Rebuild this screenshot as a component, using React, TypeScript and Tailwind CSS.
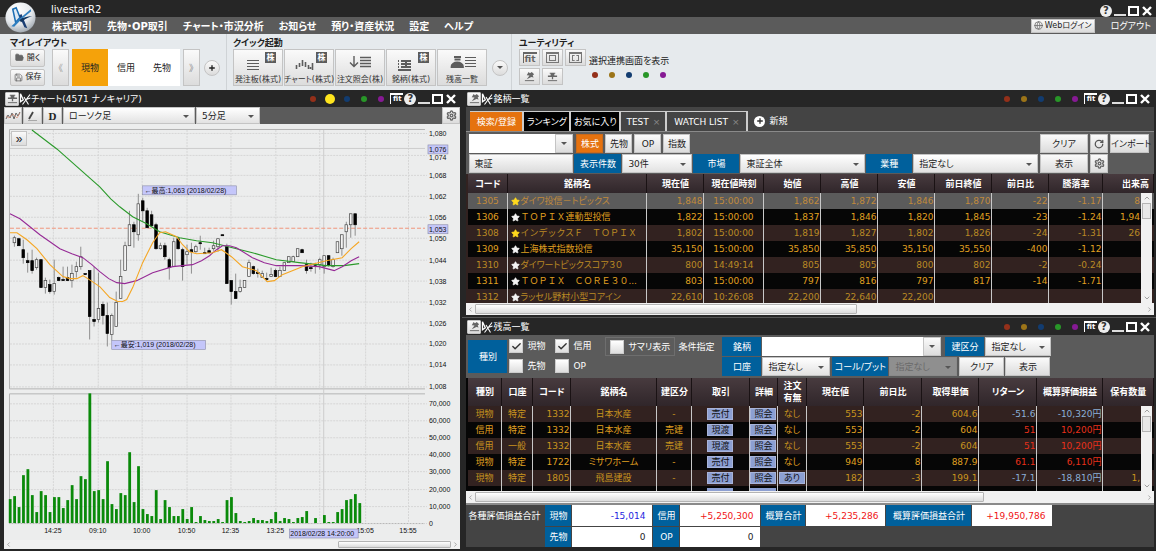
import { useState } from "react";
import type { ReactNode } from "react";
import { Check, ChevronDown, ChevronLeft, ChevronRight, ChevronUp, FolderOpen, Globe, Plus, RotateCw, Save, Settings, Star } from "lucide-react";
import { clsx } from "clsx";

const MENU = ["株式取引", "先物・OP取引", "チャート・市況分析", "お知らせ", "預り・資産状況", "設定", "ヘルプ"];

const FACE = "bg-gradient-to-b from-[#fafafa] to-[#dcdcdc] border border-[#c4c4c4]";

/* ---------- chart data ---------- */

const VOLUMES = [
  24, 27, 16, 48, 54, 28, 11, 32, 28, 11, 26, 26, 15, 23, 38, 24, 47, 44, 130, 32, 33, 24, 62, 19, 14, 30, 28, 71, 21,
  57, 14, 9, 7, 33, 4, 23, 16, 7, 7, 14, 4, 16, 1, 7, 3, 2, 2, 4, 1, 23, 26, 10, 2, 1, 2, 5, 3, 3, 2, 4, 11, 2, 5, 4,
  1, 5, 6, 12, 0, 5, 0, 8, 1, 1, 11, 14, 23, 24, 29, 20,
];

// index, high, low, body top, body bottom, 1 = falling
type Candle = [number, number, number, number, number, number];

const CANDLES: Candle[] = [
  [1, 236, 247, 238, 243, 0], [2, 238, 246, 239, 246, 1], [3, 240, 264, 250, 258, 1], [4, 253, 273, 261, 263, 1],
  [5, 250, 274, 261, 271, 1], [6, 258, 270, 260, 268, 0], [7, 260, 288, 260, 288, 1], [8, 278, 294, 281, 288, 0],
  [9, 280, 294, 285, 292, 1], [10, 260, 295, 284, 292, 0], [11, 277, 281, 278, 281, 1], [12, 267, 281, 280, 281, 1],
  [13, 267, 281, 278, 281, 1], [14, 265, 288, 274, 281, 0], [15, 262, 278, 267, 272, 0], [16, 247, 270, 257, 267, 0],
  [17, 274, 275, 274, 275, 1], [18, 271, 340, 271, 317, 1], [19, 267, 327, 320, 322, 1], [20, 273, 323, 309, 320, 0],
  [21, 302, 325, 305, 316, 1], [22, 303, 347, 316, 334, 1], [23, 314, 341, 316, 335, 0], [24, 292, 327, 303, 327, 0],
  [25, 260, 299, 277, 299, 0], [26, 242, 271, 246, 271, 0], [27, 211, 246, 225, 246, 0], [28, 222, 248, 225, 232, 1],
  [29, 194, 241, 204, 235, 0], [30, 198, 222, 201, 211, 1], [31, 208, 228, 211, 228, 1], [32, 211, 227, 215, 226, 1],
  [33, 223, 250, 225, 249, 1], [34, 243, 250, 246, 249, 0], [35, 243, 260, 246, 257, 1], [36, 258, 280, 260, 268, 1],
  [37, 238, 267, 242, 267, 0], [38, 237, 250, 239, 249, 1], [39, 248, 281, 250, 267, 1], [40, 245, 265, 252, 255, 0],
  [41, 243, 274, 250, 252, 1], [42, 245, 253, 247, 252, 0], [43, 236, 250, 243, 244, 1], [44, 248, 254, 253, 254, 1],
  [45, 248, 254, 251, 253, 1], [46, 241, 251, 246, 249, 0], [47, 239, 252, 239, 247, 0], [48, 235, 236, 235, 236, 1],
  [49, 244, 284, 247, 284, 1], [50, 281, 305, 281, 292, 1], [51, 274, 299, 292, 299, 1], [52, 280, 293, 288, 292, 0],
  [53, 281, 288, 281, 288, 0], [54, 260, 277, 263, 277, 0], [55, 266, 275, 267, 274, 1], [56, 269, 278, 273, 274, 1],
  [57, 271, 278, 274, 278, 0], [58, 273, 282, 279, 280, 1], [59, 268, 277, 275, 277, 0], [60, 269, 277, 271, 277, 1],
  [61, 267, 277, 271, 277, 0], [62, 263, 271, 263, 271, 0], [63, 257, 263, 257, 263, 0], [64, 256, 262, 257, 262, 0],
  [65, 249, 257, 249, 257, 0], [66, 249, 253, 250, 253, 1], [67, 260, 274, 265, 271, 1], [68, 263, 272, 268, 269, 1],
  [69, 263, 274, 266, 267, 1], [70, 258, 270, 260, 265, 0], [71, 256, 274, 256, 267, 0], [72, 256, 267, 256, 266, 1],
  [73, 258, 268, 260, 267, 0], [74, 242, 253, 242, 253, 0], [75, 235, 256, 235, 249, 0], [76, 222, 248, 225, 232, 0],
  [77, 214, 238, 214, 225, 0], [78, 214, 236, 214, 225, 1],
];

const PRICE_TICKS: [string, number][] = [
  ["1,080", 133], ["1,074", 155], ["1,068", 175], ["1,062", 196], ["1,056", 217], ["1,050", 238], ["1,044", 260],
  ["1,038", 281], ["1,032", 302], ["1,026", 323], ["1,020", 344], ["1,014", 365], ["1,008", 387],
];

const VOLUME_TICKS: [string, number][] = [
  ["70,000", 404], ["60,000", 421], ["50,000", 438], ["40,000", 455], ["30,000", 472], ["20,000", 490],
  ["10,000", 507], ["0", 524],
];

const TIME_TICKS: [string, number][] = [
  ["14:25", 53], ["09:10", 98], ["10:00", 142], ["10:50", 187], ["12:35", 231], ["13:25", 276], ["", 320],
  ["15:05", 366], ["15:55", 409],
];

const MA_SHORT =
  "10,233 17,233 27,240 37,249 50,265 63,277 70,279 77,279 83,276 88,279 100,287 110,298 118,302 123,302 127,300 133,288 143,263 153,243 160,233 166,232 177,237 183,245 190,252 197,254 213,253 222,250 232,257 243,267 257,271 268,282 275,281 283,275 303,267 315,264 327,261 343,258 352,249 360,242";
const MA_MIDDLE =
  "10,214 20,219 40,235 60,249 72,254 83,258 92,265 100,272 109,279 117,283 125,284 137,281 153,273 173,267 193,265 202,261 210,256 217,250 223,246 230,246 237,248 253,258 265,263 277,266 300,266 320,267 335,271 343,267 352,261 360,257";
const MA_LONG =
  "32,130 57,149 83,172 100,187 111,199 120,207 133,217 147,224 160,232 180,238 197,241 213,243 237,249 253,253 277,260 300,263 327,266 345,266 360,264";

/* ---------- table data ---------- */

type StockRow = { code: string; name: string; fav: boolean; wide: boolean; values: string[] };

const STOCKS: StockRow[] = [
  { code: "1305", name: "ダイワ投信－トピックス", fav: true, wide: false, values: ["1,848", "15:00:00", "1,862", "1,872", "1,846", "1,870", "-22", "-1.17", "8"] },
  { code: "1306", name: "ＴＯＰＩＸ連動型投信", fav: false, wide: true, values: ["1,822", "15:00:00", "1,837", "1,846", "1,820", "1,845", "-23", "-1.24", "1,94"] },
  { code: "1308", name: "インデックスＦ　ＴＯＰＩＸ", fav: true, wide: true, values: ["1,802", "15:00:00", "1,819", "1,827", "1,802", "1,826", "-24", "-1.31", "26"] },
  { code: "1309", name: "上海株式指数投信", fav: false, wide: false, values: ["35,150", "15:00:00", "35,850", "35,850", "35,150", "35,550", "-400", "-1.12", ""] },
  { code: "1310", name: "ダイワートピックスコア３０", fav: false, wide: false, values: ["800", "14:49:14", "805", "805", "800", "802", "-2", "-0.24", ""] },
  { code: "1311", name: "ＴＯＰＩＸ　ＣＯＲＥ３０...", fav: false, wide: true, values: ["803", "15:00:00", "797", "816", "797", "817", "-14", "-1.71", ""] },
  { code: "1312", name: "ラッセル野村小型コアイン", fav: false, wide: false, values: ["22,610", "10:26:08", "22,200", "22,640", "22,200", "", "", "", ""] },
];

const STOCK_HEAD = ["コード", "銘柄名", "現在値", "現在値時刻", "始値", "高値", "安値", "前日終値", "前日比", "騰落率", "出来高"];

type HoldingRow = {
  kind: string;
  account: string;
  code: string;
  name: string;
  side: string;
  trade: string;
  order: string;
  price: string;
  diff: string;
  cost: string;
  ret: string;
  pl: string;
  qty: string;
};

const HOLDINGS: HoldingRow[] = [
  { kind: "現物", account: "特定", code: "1332", name: "日本水産", side: "-", trade: "売付", order: "なし", price: "553", diff: "-2", cost: "604.6", ret: "-51.6", pl: "-10,320円", qty: "" },
  { kind: "信用", account: "特定", code: "1332", name: "日本水産", side: "売建", trade: "現渡", order: "なし", price: "553", diff: "-2", cost: "604", ret: "51", pl: "10,200円", qty: "" },
  { kind: "信用", account: "一般", code: "1332", name: "日本水産", side: "売建", trade: "現渡", order: "なし", price: "553", diff: "-2", cost: "604", ret: "51", pl: "10,200円", qty: "" },
  { kind: "現物", account: "特定", code: "1722", name: "ミサワホーム", side: "-", trade: "売付", order: "なし", price: "949", diff: "8", cost: "887.9", ret: "61.1", pl: "6,110円", qty: "" },
  { kind: "現物", account: "特定", code: "1805", name: "飛島建設", side: "-", trade: "売付", order: "あり", price: "182", diff: "-3", cost: "199.1", ret: "-17.1", pl: "-18,810円", qty: "1," },
];

const HOLDING_HEAD = ["種別", "口座", "コード", "銘柄名", "建区分", "取引", "詳細", "注文有無", "現在値", "前日比", "取得単価", "リターン", "概算評価損益", "保有数量"];

/* ---------- shared pieces ---------- */

function Mark({ className }: { className?: string }) {
  return (
    <svg viewBox="0 0 12 12" className={className} fill="none" stroke="#fff" aria-hidden="true">
      <path d="M1.500 .8v8l2.800-2z" strokeWidth="1.300" />
      <path d="M5 4l4.500 7.500M11 1.500L3.500 11.500M7 6.500L11.500 5" strokeWidth="1.100" />
    </svg>
  );
}

function PinIcon({ flat = false }: { flat?: boolean }) {
  return (
    <svg viewBox="0 0 14 12" className="h-[11px] w-[13px]" aria-hidden="true">
      {flat ? (
        <path d="M4 2h6v1H9v2h3v1.500H7.700V9H6.300V6.500H2V5h3V3H4z" fill="#666" />
      ) : (
        <path d="M6 1l1.500 1.500L9.500 1 12 3.500 10.500 5l1 2L9 6.500 4 9l3-4-3-.5z" fill="#666" />
      )}
      <path d="M2 10.500h10" stroke="#666" />
    </svg>
  );
}

function Dots({ big }: { big?: boolean }) {
  return (
    <div className="flex items-center gap-[11px]">
      <i className="size-[6px] rounded-full bg-[#94301a]" />
      {big ? <i className="-mx-[2px] size-[10px] rounded-full bg-[#ffe51e]" /> : <i className="size-[6px] rounded-full bg-[#9c7418]" />}
      <i className="size-[6px] rounded-full bg-[#123c70]" />
      <i className="size-[6px] rounded-full bg-[#289628]" />
      <i className="size-[6px] rounded-full bg-[#861a94]" />
    </div>
  );
}

function WindowButtons() {
  return (
    <div className="flex items-center gap-[2px]">
      <button aria-label="ヘルプ" className="grid size-3 place-items-center rounded-full bg-[#eee] text-[10px] leading-none font-bold text-[#333]">
        ?
      </button>
      <button aria-label="最小化" className="flex h-3 w-3 items-end">
        <i className="mb-[1px] h-[2px] w-full bg-[#ddd]" />
      </button>
      <button aria-label="最大化" className="h-[10px] w-[11px] border-2 border-white" />
      <button aria-label="閉じる" className="ml-[1px] size-[10px]">
        <svg viewBox="0 0 10 10" stroke="#fff" strokeWidth="2.400" aria-hidden="true">
          <path d="M1 1l8 8M9 1L1 9" />
        </svg>
      </button>
    </div>
  );
}

function TitleBar({ title, big, flat }: { title: string; big?: boolean; flat?: boolean }) {
  return (
    <div className="flex h-[17px] shrink-0 items-center bg-[#262626] pr-1 pl-[1px] text-white">
      <button aria-label="ピン留め" className={clsx(FACE, "grid h-[14px] w-[14px] place-items-center rounded-[1px]")}>
        <PinIcon flat={flat} />
      </button>
      <Mark className="size-3" />
      <h2 className="text-[9px] leading-4">{title}</h2>
      <div className="mr-[6px] ml-auto">
        <Dots big={big} />
      </div>
      <button className="mr-[1px] h-[11px] w-[13px] border-t-[2px] border-l border-white text-[7px] leading-[9px] font-bold">fit</button>
      <WindowButtons />
    </div>
  );
}

type PickProps = { label: string; value: string; className?: string; disabled?: boolean };

function Pick({ label, value, className, disabled }: PickProps) {
  return (
    <div className={clsx("relative flex", className)}>
      <select
        aria-label={label}
        disabled={disabled}
        className={clsx(
          "block h-full w-full appearance-none border px-[5px] text-[9px] leading-3",
          disabled ? "border-[#8a8a8a] bg-[#8f8f8f] text-[#6a6a6a]" : "border-[#c4c4c4] bg-gradient-to-b from-white to-[#e2e2e2] text-[#222]",
        )}
      >
        <option>{value}</option>
      </select>
      <i className="pointer-events-none absolute top-1/2 right-[6px] -mt-[1px] border-x-[3px] border-t-[3px] border-x-transparent border-t-[#555]" />
    </div>
  );
}

function ComboBox({ label, className }: { label: string; className?: string }) {
  return (
    <div className={clsx("flex", className)}>
      <input aria-label={label} className="h-full min-w-0 flex-1 bg-white px-1 text-[9px] text-[#222]" />
      <button aria-label={`${label}を選択`} className={clsx(FACE, "grid w-[18px] place-items-center")}>
        <i className="border-x-[3px] border-t-[3px] border-x-transparent border-t-[#555]" />
      </button>
    </div>
  );
}

function FaceButton({ children, className, label }: { children: ReactNode; className?: string; label?: string }) {
  return (
    <button aria-label={label} className={clsx(FACE, "grid shrink-0 place-items-center text-[9px] leading-3 whitespace-nowrap text-[#222]", className)}>
      {children}
    </button>
  );
}

function Tag({ children, className }: { children: ReactNode; className?: string }) {
  return <div className={clsx("grid shrink-0 place-items-center bg-[#00609c] text-[9px] leading-3 whitespace-nowrap text-white", className)}>{children}</div>;
}

function HScroll({ thumb, className }: { thumb: string; className?: string }) {
  return (
    <div className={clsx("flex shrink-0 items-center bg-[#f1f1f1]", className)}>
      <ChevronLeft className="mx-[1px] size-[7px] text-[#777]" />
      <div className="h-full flex-1 py-[1px]">
        <div className={clsx("h-full rounded-[1px] border border-[#b4b4b4] bg-gradient-to-b from-white to-[#dcdcdc]", thumb)} />
      </div>
      <ChevronRight className="mx-[1px] size-[7px] text-[#777]" />
    </div>
  );
}

function VScroll({ className }: { className?: string }) {
  return (
    <div className={clsx("absolute right-[2px] bottom-0 flex w-[11px] flex-col items-center bg-[#f1f1f1] py-[1px]", className)}>
      <ChevronUp className="size-2 text-[#777]" />
      <i className="mt-[1px] h-4 w-[9px] border border-[#b4b4b4] bg-[#e8e8e8]" />
      <ChevronDown className="mt-auto size-2 text-[#777]" />
    </div>
  );
}

/* ---------- header ---------- */

function Header() {
  return (
    <header className="relative shrink-0 text-white">
      <div className="flex h-[17px] items-center bg-[#262626] pr-1 pl-[51px]">
        <h1 className="mt-[3px] text-[10px] leading-3">livestarR2</h1>
        <div className="mt-1 ml-auto">
          <WindowButtons />
        </div>
      </div>
      <nav className="flex h-[17px] items-center bg-[#5b5b5b] pr-[5px] pl-[52px]">
        <div className="flex gap-[15px] pt-[3px]">
          {MENU.map((item) => (
            <a key={item} href="#" className="text-[10px] leading-[14px] font-bold whitespace-nowrap">
              {item}
            </a>
          ))}
        </div>
        <button className={clsx(FACE, "ml-auto flex h-[14px] w-16 items-center justify-center gap-[2px] text-[8px] leading-3 text-[#222]")}>
          <Globe className="size-[9px] text-[#666]" />
          Webログイン
        </button>
        <a href="#" className="ml-4 text-[9px] leading-3">
          ログアウト
        </a>
      </nav>
      <svg viewBox="0 0 32 32" className="absolute top-[2px] left-[5px] size-[31px]" aria-hidden="true">
        <defs>
          <radialGradient id="ball" cx="0.4" cy="0.25" r="0.8">
            <stop offset="0" stopColor="#fff" />
            <stop offset="0.6" stopColor="#e4e8ec" />
            <stop offset="1" stopColor="#9aa2aa" />
          </radialGradient>
        </defs>
        <circle cx="16" cy="16" r="15.5" fill="url(#ball)" />
        <path d="M8 7.500l3.500-1.500 4 10-4.500 5z" fill="#dfeaf4" stroke="#1d6fb4" strokeWidth="1.600" />
        <path d="M14.500 14l2.500-1.500 6 14.500-3-1z" fill="#1b3f74" />
        <path d="M26.500 7.500Q15 17 6.500 25l3 .5Q17 17 27 9.500z" fill="#2f7fc0" />
        <path d="M15 18.500Q20 15 28 14.500 20 17.500 16.500 21z" fill="#12365f" />
      </svg>
    </header>
  );
}

function KabuBadge() {
  return <span className="absolute top-[2px] right-[6px] grid size-[11px] place-items-center bg-[#5c5c5c] text-[8px] leading-none font-bold text-white">株</span>;
}

const QUICK: { label: string; badge: boolean; icon: ReactNode }[] = [
  { label: "発注板(株式)", badge: true, icon: <path d="M13 10.500h12M13 13.500h12M13 16.500h12M13 19.500h12" /> },
  { label: "チャート(株式)", badge: true, icon: <path d="M11.500 15v4M14.500 13v4M17.500 10v6M20.500 12v5M23.500 15v4M25.500 17v2M27.500 13v7" strokeWidth="1.600" /> },
  { label: "注文照会(株)", badge: false, icon: <path d="M18 6v10M14 12.500l4 4 4-4M24 7.500h11M24 10.500h11M24 13.500h11M24 16.500h11" strokeWidth="1.400" /> },
  { label: "銘柄(株式)", badge: true, icon: <path d="M11 11h1M14 11h10M11 14h1M14 14h10M11 17h1M14 17h10M11 20h13M19 11v6" strokeWidth="2" /> },
  {
    label: "残高一覧",
    badge: false,
    icon: (
      <>
        <path d="M16 7h7M16.500 9.500h6M13.500 17c-.5-6 12-6 11.500 0z" fill="#5c5c5c" strokeWidth="1.800" />
        <path d="M27 7.500h11M27 10.500h11M27 13.500h11M27 16.500h11" />
      </>
    ),
  },
];

function Ribbon() {
  const [layout, setLayout] = useState("現物");
  return (
    <div className="flex h-14 shrink-0 bg-[#e6eaed] text-[9px] leading-3 text-[#222]">
      <section className="w-[227px] shrink-0 border-r border-[#cfd3d6] pt-[3px] pl-[10px]">
        <h2 className="h-3 font-bold">マイレイアウト</h2>
        <div className="flex h-[37px]">
          <div className="mr-[7px] flex w-[35px] flex-col gap-[2px]">
            <button className={clsx(FACE, "flex flex-1 items-center justify-center gap-[3px] rounded-[2px] text-[8px]")}>
              <FolderOpen className="size-[9px] fill-[#666] text-[#666]" />
              開く
            </button>
            <button className={clsx(FACE, "flex flex-1 items-center justify-center gap-[3px] rounded-[2px] text-[8px]")}>
              <Save className="size-[9px] text-[#666]" />
              保存
            </button>
          </div>
          <FaceButton label="前へ" className="w-[17px] text-[#999]">
            《
          </FaceButton>
          <div className="mx-[3px] flex">
            {["現物", "信用", "先物"].map((name) => (
              <button key={name} onClick={() => setLayout(name)} className={clsx("w-9", layout === name ? "bg-[#f5a20a]" : "bg-white")}>
                {name}
              </button>
            ))}
          </div>
          <FaceButton label="次へ" className="w-[17px] text-[#888]">
            》
          </FaceButton>
          <button aria-label="追加" className={clsx(FACE, "ml-1 grid size-4 place-items-center self-center rounded-full")}>
            <Plus className="size-2" strokeWidth={4} />
          </button>
        </div>
      </section>

      <section className="w-[285px] shrink-0 border-r border-[#cfd3d6] pt-[3px] pl-[6px]">
        <h2 className="h-3 font-bold">クイック起動</h2>
        <div className="flex h-[37px] gap-[1px]">
          {QUICK.map((q) => (
            <button key={q.label} className={clsx(FACE, "relative flex w-[50px] shrink-0 flex-col items-center justify-between text-[8px] leading-[10px] whitespace-nowrap text-[#333]")}>
              <svg viewBox="0 0 48 22" className="h-[22px] w-12" fill="none" stroke="#5c5c5c" strokeWidth="1.200" aria-hidden="true">
                {q.icon}
              </svg>
              {q.badge && <KabuBadge />}
              {q.label}
            </button>
          ))}
          <button aria-label="その他" className={clsx(FACE, "ml-1 grid size-4 place-items-center self-center rounded-full")}>
            <i className="border-x-[3px] border-t-[3px] border-x-transparent border-t-[#555]" />
          </button>
        </div>
      </section>

      <section className="pt-[3px] pl-[7px]">
        <h2 className="h-3 font-bold">ユーティリティ</h2>
        <div className="flex gap-[3px]">
          <div className="grid grid-cols-3 gap-x-[2px] gap-y-[2px]">
            <FaceButton label="フィット" className="h-[17px] w-[21px] text-[7px] leading-none font-bold">
              <span className="h-[11px] w-[14px] border-t-2 border-l border-[#666] pt-[1px] leading-[8px] text-[#666]">fit</span>
            </FaceButton>
            <FaceButton label="ウィンドウ" className="h-[17px] w-[21px]">
              <span className="grid h-[11px] w-[13px] place-items-center border border-t-2 border-[#777]">
                <i className="h-[6px] w-[7px] border border-[#777]" />
              </span>
            </FaceButton>
            <FaceButton label="配置" className="h-[17px] w-[21px]">
              <span className="grid h-[11px] w-[13px] place-items-center border border-t-2 border-[#777]">
                <i className="h-[6px] w-[7px] border border-dashed border-[#777]" />
              </span>
            </FaceButton>
            <FaceButton label="ピンを外す" className="h-[17px] w-[21px]">
              <PinIcon />
            </FaceButton>
            <FaceButton label="ピンで固定" className="h-[17px] w-[21px]">
              <PinIcon flat />
            </FaceButton>
          </div>
          <div className="pt-[6px]">
            <p className="mb-[5px] whitespace-nowrap">選択連携画面を表示</p>
            <div className="pl-[3px]">
              <Dots />
            </div>
          </div>
        </div>
      </section>
    </div>
  );
}

/* ---------- chart window ---------- */

function barX(i: number) {
  return 10 + i * 4.436;
}

function PriceChart() {
  return (
    <svg viewBox="4 124 457 417" preserveAspectRatio="xMinYMin meet" className="block h-full w-full" fontSize="7" fill="#111">
      <path d="M9.500 389.500V129.500H426M9.500 389.500H426M9.500 524.500V394.500H426M9.500 524.500H426" fill="none" stroke="#b4b4b4" />
      <g stroke="#d6d6d6" strokeDasharray="2 1">
        {PRICE_TICKS.map(([label, y]) => (
          <path key={label} d={`M10 ${y}.5H428`} />
        ))}
        {VOLUME_TICKS.map(([label, y]) => (
          <path key={label} d={`M10 ${y}.5H428`} />
        ))}
        {TIME_TICKS.map(([, x]) => (
          <path key={x} d={`M${x}.5 130V389M${x}.5 395V524`} />
        ))}
      </g>
      <path d="M10 148.500H426M324.500 130V524" stroke="#cccccc" />
      <path d="M10 228.500H426" stroke="#f0967c" strokeDasharray="4 2" />

      {VOLUMES.map((h, i) => (
        <rect key={i} x={barX(i) - 1.2} y={524 - h} width="2.800" height={h} fill="#0a8a0a" />
      ))}

      {CANDLES.map(([i, high, low, top, bottom, down]) => (
        <g key={i}>
          <path d={`M${barX(i)} ${high}V${low}`} stroke="#777" strokeWidth="0.800" />
          <rect
            x={barX(i) - 1.3}
            y={top}
            width="2.600"
            height={bottom - top}
            fill={down ? "#000" : "#f4f4f4"}
            stroke={down ? "#000" : "#444"}
            strokeWidth="0.700"
          />
        </g>
      ))}

      <g fill="none" strokeWidth="1.100">
        <polyline points={MA_LONG} stroke="#2a9a2a" />
        <polyline points={MA_MIDDLE} stroke="#962a96" />
        <polyline points={MA_SHORT} stroke="#f5a623" />
      </g>

      {PRICE_TICKS.map(([label, y]) => (
        <text key={label} x="430" y={label === "1,074" ? y + 5 : y + 3}>
          {label}
        </text>
      ))}
      {VOLUME_TICKS.map(([label, y]) => (
        <text key={label} x="430" y={y + 3}>
          {label}
        </text>
      ))}
      {TIME_TICKS.map(([label, x]) => (
        <text key={x} x={x} y="534" textAnchor="middle">
          {label}
        </text>
      ))}

      <g fill="#c4c6fa" stroke="#8a8ca8" strokeWidth="0.600">
        <rect x="429" y="145" width="20" height="9" />
        <rect x="429" y="225" width="20" height="9" />
        <rect x="143" y="186" width="94" height="9" />
        <rect x="112" y="341" width="94" height="9" />
        <rect x="290" y="530" width="69" height="9" />
      </g>
      <text x="430" y="152">1,076</text>
      <text x="430" y="232">1,053</text>
      <text x="145" y="193">←最高:1,063 (2018/02/28)</text>
      <text x="114" y="348">←最安:1,019 (2018/02/28)</text>
      <text x="291" y="537">2018/02/28 14:20:00</text>
    </svg>
  );
}

function ChartWindow() {
  return (
    <section className="flex min-h-0 min-w-0 flex-col border-r-2 border-b-2 border-l-4 border-[#262626] bg-[#eceded]">
      <TitleBar title="チャート(4571 ナノキャリア)" big flat />
      <div className="flex h-[17px] shrink-0 gap-[1px] bg-[#5b5b5b]">
        <FaceButton label="テクニカル" className="w-[18px]">
          <svg viewBox="0 0 16 12" className="h-3 w-4" fill="none" stroke="#666" aria-hidden="true">
            <path d="M1 9l2-4 2 3 2-5 2 6 2-6 2 3 2-4" />
            <path d="M1 6l3 2 4-4 4 4 3-5" stroke="#d88a70" strokeWidth="0.700" />
          </svg>
        </FaceButton>
        <FaceButton label="ライン" className="w-[19px]">
          <svg viewBox="0 0 16 12" className="h-3 w-4" stroke="#444" aria-hidden="true">
            <path d="M4 9L8 2" strokeWidth="1.800" />
            <path d="M3 10.500h9" stroke="#999" strokeWidth="0.800" />
          </svg>
        </FaceButton>
        <FaceButton className="w-[19px]">
          <span className="font-['Liberation_Serif',serif] text-[11px] font-bold">D</span>
        </FaceButton>
        <Pick label="チャート種別" value="ローソク足" className="w-[132px]" />
        <Pick label="足種" value="5分足" className="w-16" />
        <FaceButton label="設定" className="ml-auto w-[18px]">
          <Settings className="size-[11px] text-[#666]" strokeWidth={3} />
        </FaceButton>
      </div>
      <div className="relative min-h-0 flex-1 font-['Liberation_Sans','Noto_Sans_CJK_JP',sans-serif]">
        <PriceChart />
        <FaceButton label="メニューを開く" className="absolute top-[7px] left-[7px] h-[15px] w-4 text-[12px]">
          »
        </FaceButton>
      </div>
      <HScroll thumb="ml-auto w-[113px]" className="h-[9px]" />
    </section>
  );
}

/* ---------- stock list ---------- */

function StockTabs() {
  const [tab, setTab] = useState("検索/登録");
  const tabs = [
    { name: "検索/登録", width: "w-[54px]", user: false },
    { name: "ランキング", width: "w-[47px]", user: false },
    { name: "お気に入り", width: "w-[50px]", user: false },
    { name: "TEST", width: "w-[46px]", user: true },
    { name: "WATCH LIST", width: "w-[81px]", user: true },
  ];
  return (
    <div className="flex h-[25px] shrink-0 items-end border-b border-[#8a8a8a] bg-[#444] pl-1 text-[9px] leading-3 text-white">
      {tabs.map((t) => (
        <button
          key={t.name}
          onClick={() => setTab(t.name)}
          className={clsx(
            "h-5 shrink-0 border-t border-r-2 border-[#ccc] whitespace-nowrap",
            t.width,
            tab === t.name ? "bg-[#e5720f]" : t.user ? "bg-[#444]" : "bg-black",
          )}
        >
          {t.name}
          {t.user && <span className="pl-1 text-[#888]">×</span>}
        </button>
      ))}
      <button className="ml-[6px] flex h-5 items-center gap-1">
        <span className="grid size-[11px] place-items-center rounded-full bg-white">
          <Plus className="size-2 text-[#333]" strokeWidth={4} />
        </span>
        新規
      </button>
    </div>
  );
}

function StockFilter() {
  const [market, setMarket] = useState("株式");
  return (
    <div className="flex h-[42px] shrink-0 flex-col gap-[1px] bg-[#5b5b5b] pt-[2px] pr-[5px] pl-[3px]">
      <div className="flex h-[19px] gap-[2px]">
        <ComboBox label="銘柄検索" className="mr-[1px] w-[104px]" />
        {["株式", "先物", "OP", "指数"].map((m) => (
          <button
            key={m}
            onClick={() => setMarket(m)}
            className={clsx("w-[27px] text-[9px] leading-3", market === m ? "border border-[#c96a1c] bg-[#e5720f] text-white" : clsx(FACE, "text-[#222]"))}
          >
            {m}
          </button>
        ))}
        <FaceButton className="ml-auto w-12">クリア</FaceButton>
        <FaceButton label="更新" className="w-[18px]">
          <RotateCw className="size-[10px] text-[#555]" strokeWidth={3} />
        </FaceButton>
        <FaceButton className="w-[39px]">インポート</FaceButton>
      </div>
      <div className="flex h-[19px] gap-[1px] pr-[41px]">
        <FaceButton className="w-[104px] justify-items-start pl-1">東証</FaceButton>
        <Tag className="w-[47px]">表示件数</Tag>
        <Pick label="表示件数" value="30件" className="w-[70px]" />
        <Tag className="w-[46px]">市場</Tag>
        <Pick label="市場" value="東証全体" className="min-w-0 flex-1" />
        <Tag className="w-[46px]">業種</Tag>
        <Pick label="業種" value="指定なし" className="min-w-0 flex-1" />
        <FaceButton className="ml-[1px] w-12">表示</FaceButton>
        <FaceButton label="表示設定" className="ml-[1px] w-[18px]">
          <Settings className="size-[11px] text-[#666]" strokeWidth={3} />
        </FaceButton>
      </div>
    </div>
  );
}

const TH = "border-r border-[#1a1214] bg-gradient-to-b from-[#483b3f] to-[#30262a] p-0 font-bold text-white";
const TD = "h-4 overflow-hidden border-r border-[#c8c8c8] p-0 pr-[1px] whitespace-nowrap";

function StockTable() {
  return (
    <div className="relative h-[129px] shrink-0 overflow-hidden bg-[#322220] pl-[2px]">
      <table className="w-full table-fixed border-separate border-spacing-0 text-[9px] leading-3">
        <colgroup>
          <col className="w-[40px]" />
          <col className="w-[139px]" />
          <col className="w-[57px]" />
          <col className="w-[60px]" />
          <col className="w-[57px]" />
          <col className="w-[57px]" />
          <col className="w-[57px]" />
          <col className="w-[57px]" />
          <col className="w-[57px]" />
          <col className="w-[54px]" />
          <col />
        </colgroup>
        <thead>
          <tr>
            {STOCK_HEAD.map((h) => (
              <th key={h} className={clsx(TH, "h-[19px]", h === "出来高" && "pr-1 text-right")}>
                {h}
              </th>
            ))}
          </tr>
        </thead>
        <tbody>
          {STOCKS.map((s, i) => (
            <tr key={s.code} className={i === 0 ? "bg-[#5b5b5b] text-[#c08a3c]" : i % 2 ? "bg-[#060606] text-[#e0a020]" : "bg-[#322220] text-[#ba8a24]"}>
              <td className={clsx(TD, "text-center")}>{s.code}</td>
              <td className={TD}>
                <span className={clsx("flex items-center pl-[3px]", s.wide && "[font-feature-settings:normal]")}>
                  <Star className={clsx("size-[9px] shrink-0", s.fav ? "fill-[#ffd91e] text-[#ffd91e]" : "fill-[#f4f4f4] text-[#f4f4f4]")} />
                  {s.name}
                </span>
              </td>
              {s.values.map((v, n) => (
                <td key={n} className={clsx(TD, n === 1 ? "text-center" : "text-right", n === 8 && "border-r-0 pr-[14px]")}>
                  {v}
                </td>
              ))}
            </tr>
          ))}
        </tbody>
      </table>
      <VScroll className="top-[19px]" />
    </div>
  );
}

/* ---------- holdings ---------- */

function CheckItem({ label, checked }: { label: string; checked?: boolean }) {
  return (
    <label className="flex items-center gap-[4px] text-[9px] leading-3 whitespace-nowrap text-white">
      <span className="relative grid size-[14px] place-items-center">
        <input type="checkbox" defaultChecked={checked} className="peer size-[14px] appearance-none border border-[#ccc] bg-gradient-to-b from-white to-[#dedede]" />
        <Check className="pointer-events-none absolute hidden size-[11px] text-[#333] peer-checked:block" strokeWidth={3} />
      </span>
      {label}
    </label>
  );
}

function HoldingFilter() {
  return (
    <div className="flex h-[43px] shrink-0 items-start bg-[#5b5b5b] pt-[2px] pl-[2px]">
      <Tag className="mt-[3px] h-[33px] w-[39px]">種別</Tag>
      <div className="mt-[2px] ml-[2px] grid grid-cols-[46px_46px] gap-y-[6px]">
        <CheckItem label="現物" checked />
        <CheckItem label="信用" checked />
        <CheckItem label="先物" />
        <CheckItem label="OP" />
      </div>
      <div className="ml-1 flex h-[19px] w-[70px] items-center border border-[#6e6e6e] pl-1">
        <CheckItem label="サマリ表示" />
      </div>
      <p className="mt-1 ml-[3px] w-[44px] text-[9px] leading-3 whitespace-nowrap text-white">条件指定</p>
      <div className="flex flex-col gap-[1px]">
        <div className="flex h-[19px] gap-[1px]">
          <Tag className="w-[39px]">銘柄</Tag>
          <ComboBox label="銘柄" className="mr-[3px] w-[179px]" />
          <Tag className="w-[39px]">建区分</Tag>
          <Pick label="建区分" value="指定なし" className="w-[66px]" />
        </div>
        <div className="flex h-[19px] gap-[1px]">
          <Tag className="w-[39px]">口座</Tag>
          <Pick label="口座" value="指定なし" className="mr-[1px] w-[68px]" />
          <Tag className="w-[56px]">コール/プット</Tag>
          <Pick label="コール/プット" value="指定なし" disabled className="mr-[1px] w-[68px]" />
          <FaceButton className="w-[45px]">クリア</FaceButton>
          <FaceButton className="w-[45px]">表示</FaceButton>
        </div>
      </div>
    </div>
  );
}

function CellButton({ children, className }: { children: ReactNode; className?: string }) {
  return <button className={clsx("mx-auto block h-3 border border-[#a8b4da] bg-[#8c9fd2] leading-[10px] text-[#111]", className)}>{children}</button>;
}

function retColor(v: string) {
  return v.startsWith("-") ? "text-[#8aaed6]" : "text-[#e8301a]";
}

function HoldingTable() {
  return (
    <div className="relative min-h-0 flex-1 overflow-hidden bg-[#060606] pl-[2px]">
      <table className="w-full table-fixed border-separate border-spacing-0 text-[9px] leading-3">
        <colgroup>
          <col className="w-[34px]" />
          <col className="w-[31px]" />
          <col className="w-[38px]" />
          <col className="w-[86px]" />
          <col className="w-[35px]" />
          <col className="w-[58px]" />
          <col className="w-[28px]" />
          <col className="w-[29px]" />
          <col className="w-[57px]" />
          <col className="w-[58px]" />
          <col className="w-[57px]" />
          <col className="w-[58px]" />
          <col className="w-[66px]" />
          <col />
        </colgroup>
        <thead>
          <tr>
            {HOLDING_HEAD.map((h) => (
              <th key={h} className={clsx(TH, "h-7", h === "注文有無" ? "px-1" : "whitespace-nowrap")}>
                {h}
              </th>
            ))}
          </tr>
        </thead>
        <tbody>
          {HOLDINGS.map((r, i) => (
            <tr key={i} className={i % 2 ? "bg-[#060606] text-[#e0a020]" : "bg-[#322220] text-[#c8941e]"}>
              <td className={clsx(TD, "text-center")}>{r.kind}</td>
              <td className={clsx(TD, "text-center")}>{r.account}</td>
              <td className={clsx(TD, "text-right")}>{r.code}</td>
              <td className={clsx(TD, "text-center")}>{r.name}</td>
              <td className={clsx(TD, "text-center")}>{r.side}</td>
              <td className={TD}>
                <CellButton className="w-[26px]">{r.trade}</CellButton>
              </td>
              <td className={TD}>
                <CellButton className="w-[26px]">照会</CellButton>
              </td>
              <td className={clsx(TD, "text-center")}>{r.order === "あり" ? <CellButton className="w-[26px]">あり</CellButton> : r.order}</td>
              <td className={clsx(TD, "text-right")}>{r.price}</td>
              <td className={clsx(TD, "text-right")}>{r.diff}</td>
              <td className={clsx(TD, "text-right")}>{r.cost}</td>
              <td className={clsx(TD, "text-right", retColor(r.ret))}>{r.ret}</td>
              <td className={clsx(TD, "text-right", retColor(r.pl))}>{r.pl}</td>
              <td className={clsx(TD, "border-r-0 pr-[14px] text-right")}>{r.qty}</td>
            </tr>
          ))}
          <tr>
            {HOLDING_HEAD.map((h) => (
              <td key={h} className={clsx(TD, "align-top", h === "保有数量" && "border-r-0")}>
                {(h === "取引" || h === "詳細") && <i className="mx-auto mt-[2px] block h-3 w-[26px] bg-[#8c9fd2]" />}
              </td>
            ))}
          </tr>
        </tbody>
      </table>
      <VScroll className="top-7" />
    </div>
  );
}

function Amount({ value }: { value: string }) {
  const color = value.startsWith("+") ? "text-[#f01414]" : value.startsWith("-") ? "text-[#2424e0]" : "text-[#222]";
  return <output className={clsx("flex items-center justify-end bg-white pr-[7px] text-[9px] leading-3", color)}>{value}</output>;
}

function HoldingSummary() {
  return (
    <div className="grid h-11 shrink-0 grid-cols-[76px_26px_80px_26px_80px_44px_79px_85px_80px] grid-rows-[21px_20px] gap-[1px] border-t-2 border-[#8a8a8a] bg-[#444] pl-[2px] text-white">
      <p className="self-center text-[9px] leading-3 whitespace-nowrap">各種評価損益合計</p>
      <Tag>現物</Tag>
      <Amount value="-15,014" />
      <Tag>信用</Tag>
      <Amount value="+5,250,300" />
      <Tag>概算合計</Tag>
      <Amount value="+5,235,286" />
      <Tag>概算評価損益合計</Tag>
      <Amount value="+19,950,786" />
      <Tag className="col-start-2">先物</Tag>
      <Amount value="0" />
      <Tag>OP</Tag>
      <Amount value="0" />
    </div>
  );
}

export default function App() {
  return (
    <div className="flex h-screen flex-col overflow-hidden bg-[#262626] font-['DejaVu_Sans','Noto_Sans_CJK_JP',sans-serif] [font-feature-settings:'palt']">
      <Header />
      <Ribbon />
      <main className="grid min-h-0 flex-1 grid-cols-[2fr_3fr]">
        <ChartWindow />
        <div className="flex min-h-0 min-w-0 flex-col gap-[1px] bg-[#555]">
          <section className="flex shrink-0 flex-col border-r-2 border-b-2 border-l-4 border-[#262626]">
            <TitleBar title="銘柄一覧" />
            <StockTabs />
            <StockFilter />
            <StockTable />
            <HScroll thumb="w-[57%]" className="h-3" />
          </section>
          <section className="flex min-h-0 flex-1 flex-col border-r-2 border-b-4 border-l-4 border-[#262626]">
            <TitleBar title="残高一覧" />
            <HoldingFilter />
            <HoldingTable />
            <HScroll thumb="w-[76%]" className="h-3" />
            <HoldingSummary />
          </section>
        </div>
      </main>
    </div>
  );
}
